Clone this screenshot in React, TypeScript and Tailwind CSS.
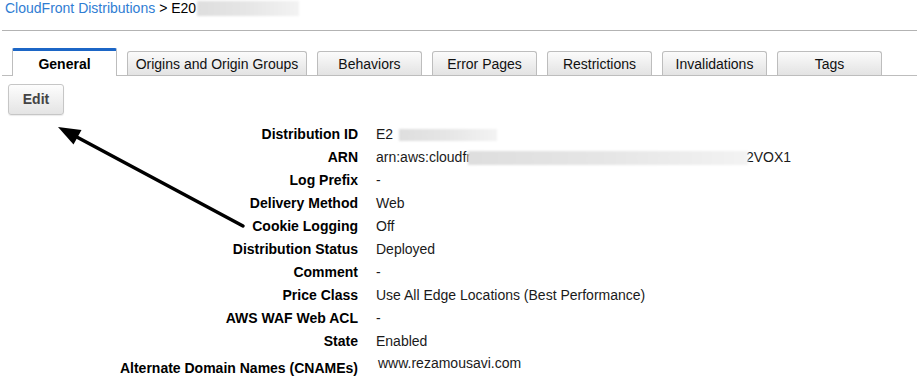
import React from 'react';

const tabs = [
  { name: 'General', w: 'w-[105px]' },
  { name: 'Origins and Origin Groups', w: 'w-[180px]' },
  { name: 'Behaviors', w: 'w-[105px]' },
  { name: 'Error Pages', w: 'w-[105px]' },
  { name: 'Restrictions', w: 'w-[105px]' },
  { name: 'Invalidations', w: 'w-[105px]' },
  { name: 'Tags', w: 'w-[105px]' },
];

function Blur({ className }: { className: string }) {
  return <span className={`inline-block bg-gradient-to-r from-[#dedede] via-[#e6e6e6] to-[#f3f3f3] blur-[1px] ${className}`} />;
}

export default function App() {
  const rows: { label: string; value: React.ReactNode }[] = [
    {
      label: 'Distribution ID',
      value: (
        <span className="flex items-center">
          E2
          <Blur className="ml-[6px] w-[98px] h-[12px]" />
        </span>
      ),
    },
    {
      label: 'ARN',
      value: (
        <span className="flex items-center">
          arn:aws:cloudfr
          <Blur className="-ml-[3px] w-[280px] h-[14px]" />
          <span className="-ml-[2px]">2VOX1</span>
        </span>
      ),
    },
    { label: 'Log Prefix', value: '-' },
    { label: 'Delivery Method', value: 'Web' },
    { label: 'Cookie Logging', value: 'Off' },
    { label: 'Distribution Status', value: 'Deployed' },
    { label: 'Comment', value: '-' },
    { label: 'Price Class', value: 'Use All Edge Locations (Best Performance)' },
    { label: 'AWS WAF Web ACL', value: '-' },
    { label: 'State', value: 'Enabled' },
  ];

  return (
    <div className="relative w-[919px] h-[383px] overflow-hidden bg-white font-['Liberation_Sans',Arial,sans-serif] text-[14px] text-[#1a1a1a]">
      {/* breadcrumb */}
      <div className="flex items-center pl-[5px] h-[17px] leading-[17px]">
        <span className="text-[#2f7dd3]">CloudFront Distributions</span>
        <span className="ml-[4px] text-black">&gt; E20</span>
        <Blur className="ml-[1px] w-[102px] h-[15px]" />
      </div>
      <div className="mt-[13px] mx-[2px] h-px bg-[#b3b3b3]" />

      {/* tabs */}
      <div className="mt-[17px] mx-[2px] flex items-end gap-[10px] pl-[10px] border-b border-[#bdbdbd]">
        {tabs.map((t, i) =>
          i === 0 ? (
            <div
              key={t.name}
              className={`${t.w} h-[28px] -mb-px pt-[1px] bg-white border-x border-[#bdbdbd] border-t-[3px] border-t-[#1c66c6] rounded-t-[2px] flex items-center justify-center font-bold text-black`}
            >
              {t.name}
            </div>
          ) : (
            <div
              key={t.name}
              className={`${t.w} h-[24px] pt-[1px] bg-gradient-to-b from-[#fbfbfb] to-[#e3e3e3] border-x border-t border-[#bdbdbd] rounded-t-[3px] flex items-center justify-center text-[#111]`}
            >
              {t.name}
            </div>
          )
        )}
      </div>

      {/* edit button */}
      <div className="pl-[8px] mt-[8px]">
        <button className="w-[56px] h-[31px] rounded-[3px] border border-[#c6c6c6] bg-gradient-to-b from-[#fdfdfd] to-[#e4e4e4] shadow-[0_1px_1px_rgba(0,0,0,0.08)] font-bold text-[#444]">
          Edit
        </button>
      </div>

      {/* details */}
      <div className="mt-[8px] grid grid-cols-[358px_1fr] gap-x-[18px]">
        {rows.map((r) => (
          <React.Fragment key={r.label}>
            <div className="h-[23px] flex items-center justify-end font-bold text-black">{r.label}</div>
            <div className="h-[23px] flex items-center text-[#1a1a1a]">{r.value}</div>
          </React.Fragment>
        ))}
        <div className="h-[29px] flex items-center justify-end pt-[2px] font-bold text-black">Alternate Domain Names (CNAMEs)</div>
        <div className="h-[29px] flex items-center pl-[2px] -mt-[4px] text-[#1a1a1a]">www.rezamousavi.com</div>
      </div>

      {/* annotation arrow */}
      <svg className="absolute inset-0 pointer-events-none" width="919" height="383" viewBox="0 0 919 383">
        <line x1="243" y1="226" x2="74" y2="135.5" stroke="#000" strokeWidth="3.5" strokeLinecap="round" />
        <polygon points="58,127 81.5,130 73.5,144.5" fill="#000" />
      </svg>
    </div>
  );
}
